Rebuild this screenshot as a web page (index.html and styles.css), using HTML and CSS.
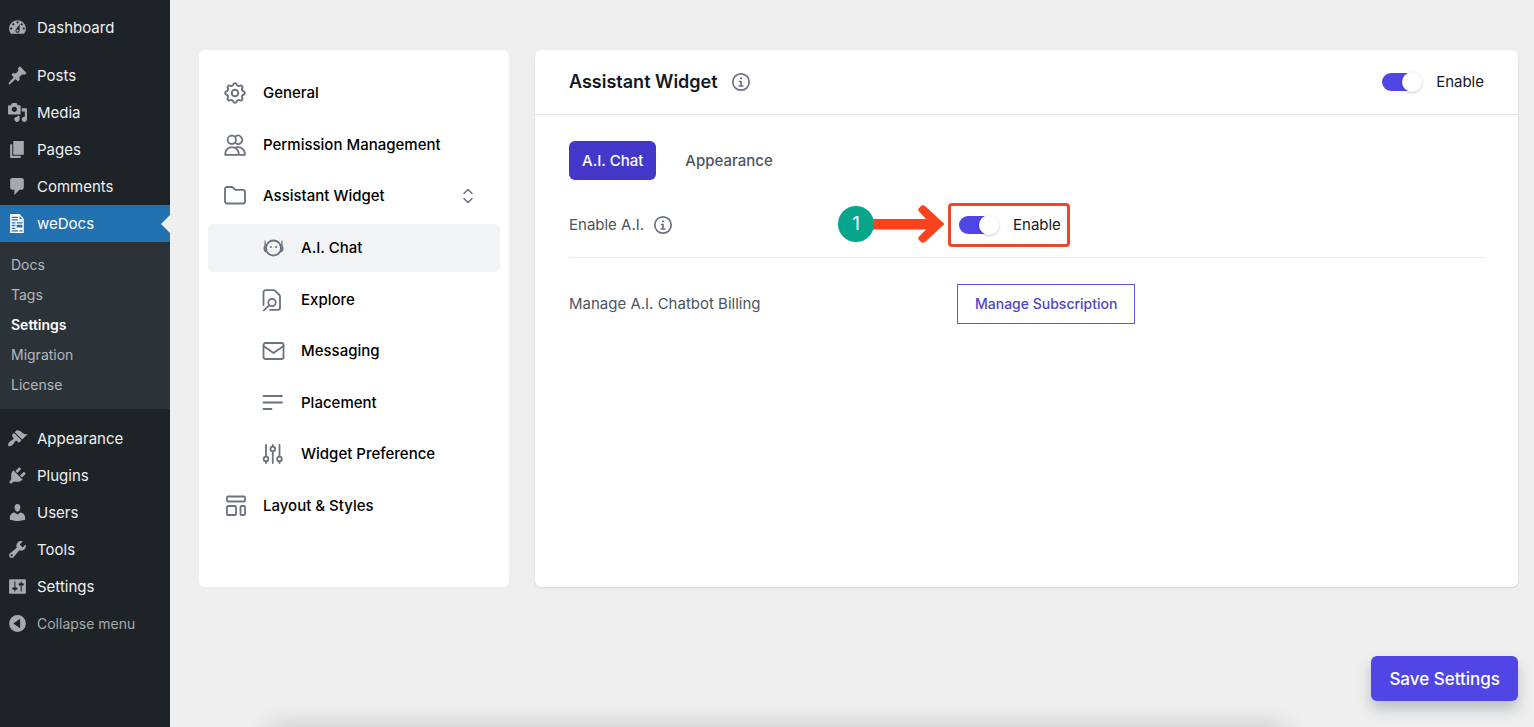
FILE: index.html
```html
<!DOCTYPE html>
<html lang="en">
<head>
<meta charset="utf-8">
<title>weDocs Settings</title>
<link rel="stylesheet" href="styles.css">
</head>
<body>
<div class="layout">
  <nav class="admin-menu" aria-label="Main menu">
    <a class="menu-item" href="#"><svg class="menu-icon" viewBox="0 0 20 20"><path d="M3.76 16h12.48c1.1-1.37 1.76-3.11 1.76-5 0-4.42-3.58-8-8-8s-8 3.58-8 8c0 1.89.66 3.63 1.76 5zM10 4c.55 0 1 .45 1 1s-.45 1-1 1-1-.45-1-1 .45-1 1-1zM6 6c.55 0 1 .45 1 1s-.45 1-1 1-1-.45-1-1 .45-1 1-1zm8 0c.55 0 1 .45 1 1s-.45 1-1 1-1-.45-1-1 .45-1 1-1zm-5.370 5.55L12 7v6c0 1.1-.9 2-2 2s-2-.9-2-2c0-.57.24-1.08.63-1.45zM4 10c.55 0 1 .45 1 1s-.45 1-1 1-1-.45-1-1 .45-1 1-1zm12 0c.55 0 1 .45 1 1s-.45 1-1 1-1-.45-1-1 .45-1 1-1zm-5 3c0-.55-.45-1-1-1s-1 .45-1 1 .45 1 1 1 1-.45 1-1z"/></svg>Dashboard</a>
    <div class="menu-gap"></div>
    <a class="menu-item" href="#"><svg class="menu-icon" viewBox="0 0 20 20"><path d="M10.44 3.02l1.82-1.82 6.36 6.35-1.83 1.82c-1.05-.68-2.48-.57-3.41.36l-.75.75c-.92.93-1.04 2.35-.35 3.41l-1.83 1.82-2.41-2.41-2.8 2.79c-.42.42-3.38 2.71-3.8 2.29s1.86-3.39 2.28-3.81l2.79-2.79L4.1 9.36l1.83-1.82c1.05.69 2.48.57 3.4-.36l.75-.75c.93-.92 1.05-2.35.36-3.41z"/></svg>Posts</a>
    <a class="menu-item" href="#"><svg class="menu-icon" viewBox="0 0 20 20"><path d="M13 11V4c0-.55-.45-1-1-1h-1.67L9 1H5L3.67 3H2c-.55 0-1 .45-1 1v7c0 .55.45 1 1 1h10c.55 0 1-.45 1-1zM7 4.5c1.38 0 2.5 1.12 2.5 2.5S8.38 9.5 7 9.5 4.5 8.38 4.5 7 5.62 4.5 7 4.5zM14 6h5v10.5c0 1.38-1.12 2.5-2.5 2.5S14 17.88 14 16.5s1.12-2.5 2.5-2.5c.17 0 .34.02.5.05V9h-3V6zm-4 8.05V13h2v3.5c0 1.38-1.12 2.5-2.5 2.5S7 17.88 7 16.5 8.12 14 9.5 14c.17 0 .34.02.5.05z"/></svg>Media</a>
    <a class="menu-item" href="#"><svg class="menu-icon" viewBox="0 0 20 20"><path d="M6 15V2h10v13H6zm-1 1h8v2H3V5h2v11z"/></svg>Pages</a>
    <a class="menu-item" href="#"><svg class="menu-icon" viewBox="0 0 20 20"><path d="M5 2h9c1.1 0 2 .9 2 2v7c0 1.1-.9 2-2 2h-2l-5 5v-5H5c-1.1 0-2-.9-2-2V4c0-1.1.9-2 2-2z"/></svg>Comments</a>
    <a class="menu-item menu-item-current" href="#"><svg class="menu-icon" viewBox="0 0 20 20"><path d="M3 1h9l4 4.500v13.500H3zM4.500 3.500h6v1.200h-6zM4.500 6h6v1.200h-6zM12 2.800v3.200h2.800zM4.500 8.800h3.500v1.200h-3.500zM9.200 8.800h5.500v1.200h-5.500zM4.500 11.300h3.500v1.200h-3.500zM9.200 11.300h5.500v2.500h-5.500zM4.500 14h3.500v1.200h-3.500zM4.500 16.400h6v1.200h-6zM11.800 16.400h2.900v1.200h-2.900z"/></svg>weDocs</a>
    <div class="submenu">
      <a class="submenu-item" href="#">Docs</a>
      <a class="submenu-item" href="#">Tags</a>
      <a class="submenu-item submenu-item-current" href="#">Settings</a>
      <a class="submenu-item" href="#">Migration</a>
      <a class="submenu-item" href="#">License</a>
    </div>
    <div class="menu-gap"></div>
    <a class="menu-item" href="#"><svg class="menu-icon" viewBox="0 0 20 20"><path d="M14.48 11.06L7.41 3.99l1.5-1.5c.5-.56 2.3-.47 3.51.32 1.21.8 1.43 1.28 2.91 2.1 1.18.64 2.45 1.26 4.45.85zm-.71.71L6.7 4.7 4.93 6.47c-.39.39-.39 1.02 0 1.41l1.06 1.06c.39.39.39 1.03 0 1.42-.6.6-1.43 1.11-2.21 1.69-.35.26-.7.53-1.01.84C1.43 14.23.4 16.08 1.4 17.07c.99 1 2.84-.03 4.18-1.36.31-.31.58-.66.85-1.02.57-.78 1.08-1.61 1.69-2.21.39-.39 1.02-.39 1.41 0l1.06 1.06c.39.39 1.02.39 1.41 0z"/></svg>Appearance</a>
    <a class="menu-item" href="#"><svg class="menu-icon" viewBox="0 0 20 20"><path d="M13.11 4.36L9.87 7.6 8 5.73l3.24-3.24c.35-.34 1.05-.2 1.56.32.52.51.66 1.21.31 1.55zm-8 1.77l.91-1.12 9.01 9.01-1.19.84c-.71.71-2.63 1.16-3.82 1.16H6.14L4.9 17.26c-.59.59-1.54.59-2.12 0-.59-.58-.59-1.53 0-2.12l1.24-1.24v-3.88c0-1.13.4-3.19 1.09-3.89zm7.26 3.97l3.24-3.24c.34-.35 1.04-.21 1.55.31.52.51.66 1.21.31 1.55l-3.24 3.25z"/></svg>Plugins</a>
    <a class="menu-item" href="#"><svg class="menu-icon" viewBox="0 0 20 20"><path d="M10 9.25c-2.27 0-2.73-3.44-2.73-3.44C7 4.02 7.82 2 9.97 2c2.16 0 2.98 2.02 2.71 3.81 0 0-.41 3.44-2.68 3.44zm0 2.57L12.72 10c2.39 0 4.52 2.33 4.52 4.53v2.49s-3.65 1.13-7.24 1.13c-3.65 0-7.24-1.13-7.24-1.13v-2.49c0-2.25 1.94-4.48 4.47-4.48z"/></svg>Users</a>
    <a class="menu-item" href="#"><svg class="menu-icon" viewBox="0 0 20 20"><path d="M16.68 9.77c-1.34 1.34-3.3 1.67-4.95.99l-5.41 6.52c-.99.99-2.59.99-3.58 0s-.99-2.59 0-3.57l6.52-5.42c-.68-1.65-.35-3.61.99-4.95 1.28-1.28 3.12-1.62 4.72-1.06l-2.89 2.89 2.82 2.82 2.86-2.87c.53 1.58.18 3.39-1.08 4.65zM3.81 16.21c.4.39 1.04.39 1.43 0 .4-.4.4-1.04 0-1.43-.39-.4-1.03-.4-1.43 0-.39.39-.39 1.03 0 1.43z"/></svg>Tools</a>
    <a class="menu-item" href="#"><svg class="menu-icon" viewBox="0 0 20 20"><path d="M18 16V4c0-.55-.45-1-1-1H3c-.55 0-1 .45-1 1v12c0 .55.45 1 1 1h14c.55 0 1-.45 1-1zM8 11h1c.55 0 1 .45 1 1s-.45 1-1 1H8v1.5c0 .28-.22.5-.5.5s-.5-.22-.5-.5V13H6c-.55 0-1-.45-1-1s.45-1 1-1h1V5.500c0-.28.22-.5.5-.5s.5.22.5.5V11zm5-2h-1c-.55 0-1-.45-1-1s.45-1 1-1h1V5.500c0-.28.22-.5.5-.5s.5.22.5.5V7h1c.55 0 1 .45 1 1s-.45 1-1 1h-1v5.500c0 .28-.22.5-.5.5s-.5-.22-.5-.5V9z"/></svg>Settings</a>
    <button class="menu-item menu-collapse" type="button"><svg class="menu-icon" viewBox="0 0 20 20"><path d="M10 2a8 8 0 1 0 0 16a8 8 0 1 0 0-16zM12.500 5.500v9L6 10z"/></svg>Collapse menu</button>
  </nav>

  <main class="content">
    <div class="panels">
      <nav class="card settings-nav" aria-label="Settings sections">
        <a class="nav-item" href="#"><svg class="nav-icon" viewBox="1 1 22 22"><path d="M10.325 4.317c.426-1.756 2.924-1.756 3.35 0a1.724 1.724 0 002.573 1.066c1.543-.94 3.31.826 2.37 2.37a1.724 1.724 0 001.065 2.572c1.756.426 1.756 2.924 0 3.35a1.724 1.724 0 00-1.066 2.573c.94 1.543-.826 3.31-2.37 2.37a1.724 1.724 0 00-2.572 1.065c-.426 1.756-2.924 1.756-3.35 0a1.724 1.724 0 00-2.573-1.066c-1.543.94-3.31-.826-2.37-2.37a1.724 1.724 0 00-1.065-2.572c-1.756-.426-1.756-2.924 0-3.35a1.724 1.724 0 001.066-2.573c-.94-1.543.826-3.31 2.37-2.37.996.608 2.296.07 2.572-1.065z"/><circle cx="12" cy="12" r="3"/></svg>General</a>
        <a class="nav-item" href="#"><svg class="nav-icon" viewBox="0 0 24 24"><circle cx="8.800" cy="6.800" r="4.200"/><path d="M12.600 3.300a4.200 4.200 0 1 1 0 7M2.200 21.800v-.800a6.800 6.800 0 0 1 13.600 0v.800zM13.500 14.200h1.600a6.800 6.800 0 0 1 6.800 6.800v.800h-6"/></svg>Permission Management</a>
        <a class="nav-item" href="#"><svg class="nav-icon" viewBox="0 0 24 24"><path d="M2 17.500V5a2 2 0 0 1 2-2h4.600a2 2 0 0 1 1.500.700l1.300 1.500a2 2 0 0 0 1.500.700H20a2 2 0 0 1 2 2v9.600a2 2 0 0 1-2 2H4a2 2 0 0 1-2-2z"/></svg>Assistant Widget<svg class="nav-sort" viewBox="0 0 12 16"><path d="M2 5.500L6 1.500l4 4M2 10.500l4 4 4-4"/></svg></a>
        <a class="nav-item nav-child nav-item-current" href="#"><svg class="nav-icon" viewBox="0 0 24 24"><circle cx="12.500" cy="12" r="7.500"/><path class="solid" d="M3.500 4.500h1l.400 4 1.300.300a8 8 0 0 0 0 7.700C3.500 16.700 2.500 14.500 2.500 12.500c0-1.200.300-2.200 1-3zM21.500 4.500h-1l-.400 4-1.300.300a8 8 0 0 1 0 7.700c2.700.200 3.700-2 3.700-4 0-1.200-.300-2.200-1-3z"/><circle class="solid" cx="9.800" cy="11" r="1.100"/><circle class="solid" cx="15.200" cy="11" r="1.100"/></svg>A.I. Chat</a>
        <a class="nav-item nav-child" href="#"><svg class="nav-icon" viewBox="0 0 24 24"><path d="M2.500 17V4.200a2 2 0 0 1 2-2h8.300a2 2 0 0 1 1.400.600l4.200 4.200a2 2 0 0 1 .600 1.400v11.400a2 2 0 0 1-2 2H9M8.300 17.200L2.800 22.400"/><circle cx="11" cy="14.500" r="3.700"/></svg>Explore</a>
        <a class="nav-item nav-child" href="#"><svg class="nav-icon" viewBox="0 0 24 24"><rect x="2.500" y="4" width="20" height="16" rx="2"/><path d="M2.500 7l10 7 10-7"/></svg>Messaging</a>
        <a class="nav-item nav-child" href="#"><svg class="nav-icon" viewBox="0 0 24 24"><path d="M2.500 5h18.500M2.500 11.500h18.500M2.500 18h8"/></svg>Placement</a>
        <a class="nav-item nav-child" href="#"><svg class="nav-icon" viewBox="0 0 24 24"><path d="M5 3v11.500M5 19.500V21M11.800 3v1.500M11.800 9.500V21M18.500 3v11.500M18.500 19.500V21"/><circle cx="5" cy="17" r="2.300"/><circle cx="11.800" cy="7" r="2.300"/><circle cx="18.500" cy="17" r="2.300"/></svg>Widget Preference</a>
        <a class="nav-item" href="#"><svg class="nav-icon" viewBox="0 0 24 24"><rect x="4" y="2.500" width="18" height="5" rx="1"/><rect x="4" y="12" width="9" height="9" rx="1"/><rect x="17.500" y="12" width="4.500" height="9" rx="1"/></svg>Layout &amp; Styles</a>
      </nav>

      <section class="card settings-panel">
        <header class="panel-header">
          <h1 class="panel-title">Assistant Widget</h1>
          <svg class="info-icon" viewBox="0 0 20 20"><circle cx="10" cy="10" r="8.200"/><path d="M8.500 9.500H10V14M8.200 14h3.600"/><circle class="solid" cx="10" cy="6.300" r="1.100"/></svg>
          <label class="switch panel-switch"><input class="switch-input" type="checkbox" checked><span>Enable</span></label>
        </header>
        <div class="panel-body">
          <div class="tabs" role="tablist">
            <button class="tab tab-current" type="button" role="tab" aria-selected="true">A.I. Chat</button>
            <button class="tab" type="button" role="tab" aria-selected="false">Appearance</button>
          </div>
          <div class="setting-row">
            <div class="setting-label">Enable A.I.<svg class="info-icon" viewBox="0 0 20 20"><circle cx="10" cy="10" r="8.200"/><path d="M8.500 9.500H10V14M8.200 14h3.600"/><circle class="solid" cx="10" cy="6.300" r="1.100"/></svg></div>
            <div class="callout">
              <label class="switch"><input class="switch-input" type="checkbox" checked><span>Enable</span></label>
              <div class="callout-frame"></div>
              <div class="callout-pointer">
                <span class="callout-step">1</span>
                <svg class="callout-arrow" viewBox="0 0 72 38"><path d="M0 14h53l-7-7.500q-1.500-1.800 0-3.500l2-2q2-1.500 4 0L71.500 19 52 37q-2 1.500-4 0l-2-2q-1.500-1.700 0-3.500l7-7H0z"/></svg>
              </div>
            </div>
          </div>
          <div class="setting-row">
            <div class="setting-label">Manage A.I. Chatbot Billing</div>
            <button class="outline-button" type="button">Manage Subscription</button>
          </div>
        </div>
      </section>
    </div>
    <div class="actions"><button class="save-button" type="button">Save Settings</button></div>
  </main>
</div>
<div class="bottom-shade"></div>
</body>
</html>
```
FILE: styles.css
```css
* { box-sizing: border-box; }

body {
  margin: 0;
  background: #efefef;
  color: #111827;
  font-family: Inter, "Liberation Sans", sans-serif;
  font-size: 15px;
  line-height: 20px;
  overflow: hidden;
}

a { color: inherit; text-decoration: none; }
button { font: inherit; cursor: pointer; }
svg { flex: none; }

.layout { display: flex; min-height: 100vh; }

/* Admin menu */
.admin-menu {
  flex: none;
  width: 170px;
  padding-top: 9px;
  background: #1d2327;
  color: #f0f0f1;
}

.menu-item {
  position: relative;
  display: flex;
  align-items: center;
  gap: 9px;
  width: 100%;
  height: 37px;
  padding: 0 7px;
}

.menu-icon { width: 21px; height: 21px; fill: #a7aaad; fill-rule: evenodd; }
.menu-gap { height: 11px; }
.menu-item-current { background: #2271b1; color: #fff; }
.menu-item-current .menu-icon { fill: #fff; }

.menu-item-current::after {
  content: "";
  position: absolute;
  top: 50%;
  right: 0;
  margin-top: -9px;
  border: 9px solid transparent;
  border-left-width: 0;
  border-right-color: #efefef;
}

.menu-collapse { border: 0; background: none; color: #a7aaad; text-align: left; font-size: 14px; }

.submenu { padding: 8px 0 9px; background: #2c3338; font-size: 14px; }
.submenu-item { display: block; padding: 5px 11px; color: #b4b8bb; }
.submenu-item-current { color: #fff; font-weight: 600; }

/* Content */
.content { flex: 1; min-width: 0; padding: 50px 16px 26px 29px; }
.panels { display: flex; gap: 26px; min-height: 537px; }

.card {
  background: #fff;
  border-radius: 6px;
  box-shadow: 0 1px 2px rgba(0, 0, 0, .12);
}

.settings-nav {
  display: flex;
  flex: none;
  flex-direction: column;
  justify-content: space-between;
  width: 310px;
  padding: 19px 9px 57px;
  box-shadow: none;
}

.nav-item {
  display: flex;
  align-items: center;
  gap: 16px;
  height: 48px;
  padding: 0 26px 0 15px;
  border-radius: 6px;
  color: #000;
  font-weight: 500;
}

.nav-child { padding-left: 53px; }
.nav-item-current { background: #f3f4f6; }

.nav-icon, .nav-sort, .info-icon {
  fill: none;
  stroke: #6b7280;
  stroke-linecap: round;
  stroke-linejoin: round;
}

.nav-icon { width: 24px; height: 24px; stroke-width: 1.8; }
.nav-sort { width: 12px; height: 16px; margin-left: auto; stroke-width: 1.5; }
.info-icon { width: 20px; height: 20px; stroke-width: 1.7; }
.nav-icon .solid, .info-icon .solid { fill: #6b7280; stroke: none; }

.settings-panel { flex: 1; min-width: 0; }

.panel-header {
  display: flex;
  align-items: center;
  gap: 13px;
  height: 65px;
  padding: 0 34px;
  border-bottom: 1px solid #e5e7eb;
}

.panel-title { margin: 0; font-size: 18px; font-weight: 600; line-height: 28px; }
.panel-switch { margin-left: auto; }
.panel-body { padding: 26px 34px; }

/* Toggle switch */
.switch { display: flex; align-items: center; gap: 14px; }

.switch-input {
  position: relative;
  width: 40px;
  height: 20px;
  margin: 0;
  appearance: none;
}

.switch-input::before {
  content: "";
  position: absolute;
  inset: 1px 3px 1px 0;
  border-radius: 9px;
  background: #4f46e5;
}

.switch-input::after {
  content: "";
  position: absolute;
  top: 0;
  right: 0;
  width: 20px;
  height: 20px;
  border-radius: 50%;
  background: #fff;
  box-shadow: 0 1px 3px rgba(0, 0, 0, .22);
}

/* Tabs */
.tabs { display: flex; gap: 16px; }

.tab {
  height: 39px;
  padding: 0 13px;
  border: 0;
  border-radius: 6px;
  background: none;
  color: #4b5563;
  font-weight: 500;
}

.tab-current { background: #4338ca; color: #fff; }

/* Settings rows */
.setting-row {
  display: grid;
  grid-template-columns: minmax(0, 388px) 1fr;
  align-items: center;
  justify-items: start;
  padding: 26px 0;
}

.tabs + .setting-row { padding: 35px 0 22px; border-bottom: 1px solid #e5e7eb; }
.setting-label { display: flex; align-items: center; gap: 9px; color: #4b5563; }

.outline-button {
  height: 40px;
  padding: 0 17px;
  border: 1px solid #6056d6;
  background: #fff;
  color: #4f46c8;
  font-size: 14px;
  font-weight: 500;
}

/* Callout drawn over the row */
.callout { position: relative; padding-left: 2px; }

.callout-frame {
  position: absolute;
  inset: -12px -9px;
  border: 3px solid #ea4a2b;
  border-radius: 4px;
  pointer-events: none;
}

.callout-pointer {
  position: absolute;
  top: 50%;
  right: 100%;
  display: flex;
  align-items: center;
  margin: -20px 12px 0 0;
}

.callout-step {
  width: 36px;
  height: 36px;
  border-radius: 50%;
  background: #06a58c;
  color: #fff;
  font-size: 19px;
  line-height: 36px;
  text-align: center;
}

.callout-arrow { width: 72px; height: 38px; margin-left: -1px; fill: #f8431c; }

/* Footer */
.actions { display: flex; justify-content: flex-end; margin-top: 69px; }

.save-button {
  height: 45px;
  padding: 0 18px;
  border: 0;
  border-radius: 6px;
  background: #4f46e5;
  box-shadow: 0 8px 14px rgba(30, 50, 60, .25);
  color: #fff;
  font-size: 17px;
  font-weight: 500;
}

.bottom-shade {
  position: fixed;
  top: 100%;
  right: 250px;
  left: 270px;
  height: 20px;
  box-shadow: 0 0 26px rgba(0, 0, 0, .2);
}
```
